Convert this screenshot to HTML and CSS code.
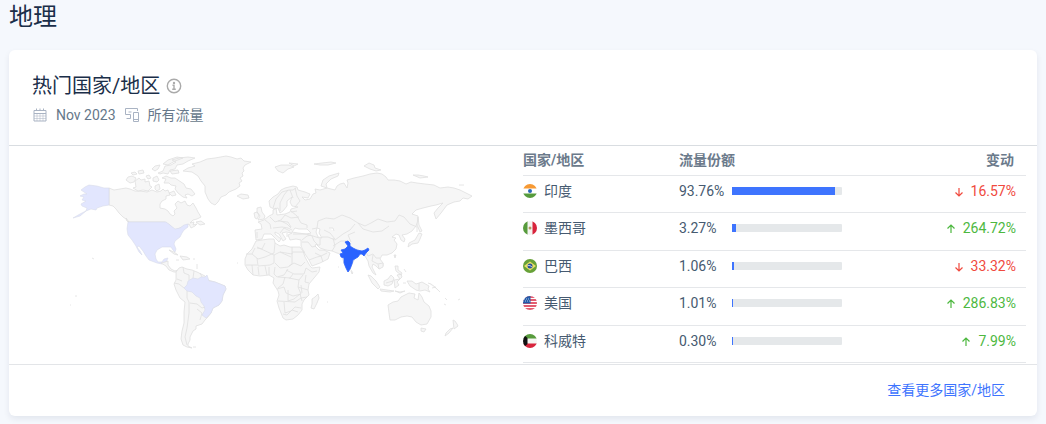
FILE: index.html
```html
<!DOCTYPE html>
<html lang="zh-CN">
<head>
    <meta charset="UTF-8">
    <meta name="viewport" content="width=device-width, initial-scale=1.0">
    <title>地理</title>
    <link rel="stylesheet" href="styles.css">
</head>
<body>
    <h1>地理</h1>

    <section class="card">
        <header class="card-header">
            <h2>热门国家/地区
                <svg class="info" viewBox="0 0 16 16" width="16" height="16"><circle cx="8" cy="8" r="6.700"/><path d="M6.500 7.200H8v4M6.200 11.300h3.600"/><circle class="dot" cx="8" cy="4.900" r=".5"/></svg>
            </h2>
            <div class="meta">
                <svg viewBox="0 0 16 16" width="16" height="16"><path d="M2 3.500h12v10.500H2zM2 6.500h12M4.500 1.500v2M8 1.500v2M11.500 1.500v2"/><path class="thin" d="M5 6.500v7.500M8 6.500v7.500M11 6.500v7.500M2 9h12M2 11.500h12"/></svg>
                <span>Nov 2023</span>
                <svg viewBox="0 0 16 16" width="16" height="16"><path d="M13.500 4V1.500H1.500v6H6.500V11.500M2.500 11.500h4M4.500 5h3M9.500 5.500h5v9h-5zM9.500 12.500h5"/></svg>
                <span>所有流量</span>
            </div>
        </header>

        <div class="content">
            <svg class="map" viewBox="9 146 514 218" role="img" aria-label="热门国家/地区">
                <!-- North America -->
                <path class="land" d="M109 188L114 190 120 189 126 188 130 189 135 191 140 191 147 192 152 190 157 192 161 191 163 189 165 191 168 190 170 195 166 196 166 199 162 201 160 204 160 208 165 209 168 211 170 214 173 216 175 214 174 211 177 208 175 204 178 201 181 203 185 201 187 205 190 206 193 203 196 208 198 212 201 217 197 219 193 220 190 223 194 222 193 225 197 224 195 226 191 228 189 224 182 227 175 230 170 225 165 222 128 222 126 219 123 217 119 213 116 209 113 206 109 205z"/>
                <path class="land" d="M183 171L188 168 195 166 192 164 200 162 207 159 215 158 226 156 231 157 237 159 241 158 244 161 251 162 245 165 243 168 244 171 242 173 243 176 240 178 242 181 239 183 240 186 236 189 229 192 226 195 221 197 218 202 215 205 211 203 208 199 205 192 205 186 201 181 198 176 192 172z"/>
                <path class="land" d="M126 180l2-3 4-1 4 2-2 4-4 1zM135 181l4-3 2 2 4-1 0 3 4-1 1 5 2 1-4 4-5-1-5 1-5-3 3-1zM131 173l4-1 2 2-4 1zM138 171l5-1 1 3-5 1zM146 176l3-1 2 3-3 1zM153 178l4-2 2 4-2 2-4-1zM155 186l4-2 1 5-3 2-2-2zM162 178l4-2 5 2 4 0 6 4 3 2 2 4 5 1 4 5-3 2-4-2-3 1 2 3-4-1-5-4-3-4 1-3-5-1-2-2-5 0 2-4zM152 169l3-3 5-1-2 4-3 2zM158 173l5-2 2-5 6-1 5-3-4-2 7-2 9-1 7 1-7 3-5 3-6 1-2 4-5 1-2 4-5-1-3 1zM163 164l5-4 9-3 6 1-8 3-7 4zM170 171l8-1 1 3-7 1zM169 193l5-2 2 4-4 1zM196 222l5-1 4 3-5 1zM126 218l3 4-2-1z"/>
                <path class="country" d="M81 190L85 187 89 185 97 186 104 188 109 188V205L103 206 97 208 96 210 91 209 86 211 80 216 73 218 80 214 86 211 87 208 82 206 81 204 86 201 82 200 84 197 80 196 84 194 87 194z"/>
                <path class="country" d="M128 222H166L170 225 175 229 180 228 184 225 188 224 188 227 184 230 182 233 180 237 175 241 174 244 176 249 175 252 173 250 171 247 166 247 162 247 157 250 155 254 156 259 158 262 162 262 164 259 168 258 166 262 162 264 157 263 149 260 146 256 143 251 139 246 137 247 140 251 142 255 139 252 136 246 132 240 128 235 127 229z"/>
                <path class="land" d="M161 263l4-1 3-1 0 4 3 4 4 2 3-1 0 2-4 0-5-2-3-4zM169 250l5 2 4 3-4-1zM180 256l7 1 3 2-7 1zM176 260l3 0M193 259l2 0M197 264l0 5"/>
                <!-- South America -->
                <path class="land" d="M176 272L179 268 182 267 187 269 192 270 197 272 201 274 205 276 208 280 215 282 225 286 226 289 223 295 222 301 219 305 213 308 211 313 208 317 205 320 202 324 196 326 196 329 193 331 190 337 190 340 188 344 188 346 192 348 187 347 183 345 181 339 182 331 184 323 184 312 185 302 180 298 176 290 174 284 176 280z"/>
                <path class="country" d="M188 281L193 278 198 279 201 277 205 277 207 275 209 281 215 282 225 286 226 289 223 295 222 301 219 305 213 308 211 313 206 318 202 315 205 310 204 306 201 302 200 298 196 296 192 292 187 291 184 288 187 285z"/>
                <path class="border" d="M183 267l1 6 5 2 0 5M177 279l5 2M174 283l5 1 5 4M193 278l1-7M202 277l-2-4M187 291l0 7 2 4 0 11-2 15-2 9 2 8M190 303l7 1 5 4 3-1M197 309l5 4-2 7"/>
                <path class="land" d="M92 258l2 1M75 296l2 0M70 305l1 0M237 263l1 0M193 347l3 0"/>
                <!-- Europe and Asia -->
                <path class="land" d="M270 207L269 201 273 197 278 194 281 190 285 188 289 187 293 186 297 187 298 190 305 192 310 194 308 198 302 197 305 200 310 199 313 194 316 193 315 189 320 190 327 188 335 190 337 186 340 184 344 183 347 188 348 183 347 180 354 178 363 176 370 174 377 173 382 174 386 177 388 180 394 180 400 181 406 184 411 182 417 183 425 184 434 185 440 188 448 187 454 188 460 190 466 193 472 196 468 199 463 198 460 201 454 202 447 205 444 209 441 213 436 219 434 213 438 208 443 203 436 205 431 206 423 208 416 210 412 214 418 216 418 221 416 226 412 231 407 234 402 235 405 239 404 242 401 240 399 235 396 234 392 237 396 238 394 240 397 244 396 249 392 253 387 255 382 255 380 259 383 263 383 266 379 269 376 266 373 264 372 267 376 275 373 273 369 266 368 261 365 256 361 254 356 257 352 264 350 270 348 272 345 266 343 260 341 254 337 253 332 251 326 250 320 248 316 244 315 246 319 250 324 250 330 253 328 259 320 263 312 266 309 260 305 254 301 246 301 240 296 239 290 240 288 235 292 233 286 232 282 233 286 239 283 241 279 234 275 232 275 234 281 239 279 242 275 238 271 234 264 234 262 239 256 240 255 230 262 229 261 224 258 222 264 220 269 216 273 214 273 210 276 208 277 215 285 214 290 212 291 209 298 207 292 206 290 202 292 197 287 201 287 206 283 211 280 213 278 208 274 209z"/>
                <path class="water" d="M292 232L295 228 299 229 303 229 307 229 311 233 306 234 298 233zM317 228L320 229 319 233 322 238 318 237 316 232zM329 228l4 0 1 3"/>
                <path class="land" d="M255 218l-1-5 3-1 2 3-2 4zM257 208l4-1 1 5 3 4-1 3-6 1 2-4-3-4zM237 196l4-2 7 1 1 3-6 1zM275 167l6-2 8 0 5 2-6 2-5 4-5-2zM289 163l9 1-4 2zM314 164l8-1 9-1 5 1-8 2-8 0zM321 186l2-6 6-4 10-3-1 3-7 3-5 5 1 4zM364 166l5-3 5 2 1 3 6 2-5 1-6-2zM413 175l5 0 6 1 4 1-8 1zM459 185l5 0M418 217l1 8 3 6-2 1-3-7zM419 233l3 1-2 5-2 4-6 1-4 3 1-4 6-3z"/>
                <path class="border" d="M273 208l3-9 6-7 7-2 4 0 3-2M280 211l0-8 4-8 4-5M290 190l3 8M295 188l2 8 3 5-5 6M265 220l5 4 1 5M270 217l5 5 6-2 4-5M285 215l6 3 8-1M281 221l6 3 4 4M273 228l9-1 6 1 4 2M291 211l6 5 4 7 6 2 0 3M297 211l-6 1M280 233l4-5 6 3M257 232l0 6M291 227l-3-5-10-1M287 233l0 4M293 234l13 0 7 2 6 2M312 229l5-1 1-7 8-3 8 1 8-4 8 3 8 5 7 3 6-3 7-4 9 3 8-1 4-6 5 2 6 7 7 3 0 5M358 223l5 6 10 3 9-1 7-5M322 237l6 0 7 3 8-6 7-4 5-6M302 240l5-4 4-1M302 242l6 0 4 5 4-1M312 236l2 5 4 4M320 238l0 7-3 0M333 238l2 8-3 5M333 246l8-5 7 0M324 230l6 3 5 6M351 242l-3-7 7-3M356 249l6 3 5-2M365 250l3 6 5-2 3 4 4 0M373 255l-1 6 6 3M315 253l6 3 6-3M309 260l8-3 4-1 2 6"/>
                <!-- Africa -->
                <path class="land" d="M256 241L262 240 269 239 274 239 275 243 280 246 284 245 290 247 300 247 303 251 305 257 310 266 312 268 320 267 319 272 314 278 309 284 308 290 309 295 304 300 302 304 302 310 298 315 293 319 286 320 283 318 279 308 277 301 279 295 278 291 273 283 274 278 269 275 260 276 253 275 248 270 245 265 245 259 247 254 252 249z"/>
                <path class="land" d="M312 304L312 299 315 297 318 294 319 298 317 303 314 309 311 308z"/>
                <path class="border" d="M246 254l6 0 3-6M252 254l6 5 7-2 9-4 1-10M257 247l17 8 6-3 12 2 0-7M265 243l-3 6-5-1M292 252h13M292 253v11l-4 3-8 1-5-5M274 255l0 8-4 2-12 1-1-8M280 252l11 5M246 265h11M252 265l1 10M258 267l1 8M265 266l2 9M269 267l0 8M275 267l-1 7 3 3 7-2 4-6M286 270l8 4 10 0 2-6 6 4 5-1M289 266l5-3 7 3 4-4M293 274l-3 4-12-1M285 277l-2 7-5 4M303 275l-4 5-10-2M299 280l-1 7 3 7-8 2-7-3-2-6-7 2M306 275l-1 7 4 1M298 287l10 3M278 301l17 1 6-4 6-1M288 290l0 11 6-2 6-5 2 7M284 302l1 11 6-2 4-4 6 1M283 314l4 1 5-5 6 2M301 285l1 8"/>
                <path class="land" d="M327 302l1 0M338 267l1 0"/>
                <!-- India -->
                <path class="india" d="M345 242L348 241 350 243 350 246 353 248 357 250 362 251 365 250 368 248 369 250 366 253 364 256 362 254 360 254 358 257 353 260 352 264 350 269 348 272 346 268 344 263 344 258 341 257 340 254 343 253 341 250 345 249 348 246z"/>
                <path class="land" d="M351 270l2 3-1 1-1-3"/>
                <!-- South East Asia and Oceania -->
                <path class="land" d="M368 275l3 1 5 5 4 6-2 2-6-6zM380 289l7 1 7 1-4 1-9-1zM384 281l4-2 3-4 3 3-2 6-4 2-4-1zM394 280l6-1-3 3 2 3-4 3zM395 266l3 0 0 4 4 3-1 2-5-4zM397 275l4-1 1 3-2 2zM395 291l5 1 5-1-5 2zM394 255l2 0-1 3zM378 264l5-1 0 4-4 2zM407 281l5 0 4 3 6-2 7 4-1 3 2 3-5-2-5 1-4-1-6-4zM428 283l3 1 4 3 5 5M432 288l4-1M445 298l2 2M444 304l2 1M458 300l2-1M453 320l2 1 2 3 1 2-4 3zM453 328l-4 5-4 3 1-3 4-4zM421 328l5 1-2 3-3-1zM404 269l2 3M403 283l3 0"/>
                <path class="border" d="M419 283v7M386 283l7-2"/>
                <path class="land" d="M388 305L393 302 398 301 401 297 405 295 409 293 415 294 414 298 418 300 419 293 422 297 424 302 429 306 431 311 431 317 427 324 421 325 416 322 412 317 407 316 401 317 395 320 390 320 389 313z"/>
            </svg>

            <table>
                <thead>
                    <tr><th class="name">国家/地区</th><th class="share">流量份额</th><th class="change">变动</th></tr>
                </thead>
                <tbody>
                    <tr>
                        <td><div class="cell"><svg class="flag" viewBox="0 0 14 14"><path fill="#fff" d="M0 0h14v14H0z"/><path fill="#f79a34" d="M0 0h14v4.500H0z"/><path fill="#579b3c" d="M0 9.500h14V14H0z"/><circle cx="7" cy="7" r="2" fill="#2a67b8"/></svg>印度</div></td>
                        <td><div class="cell"><span class="percent">93.76%</span><span class="bar"><span style="width:94%"></span></span></div></td>
                        <td class="change down"><svg viewBox="0 0 10 10"><path d="M5 1v8M1.500 5.500L5 9l3.500-3.500"/></svg>16.57%</td>
                    </tr>
                    <tr>
                        <td><div class="cell"><svg class="flag" viewBox="0 0 14 14"><path fill="#f5f5f2" d="M0 0h14v14H0z"/><path fill="#579b3c" d="M0 0h4.500v14H0z"/><path fill="#d8243c" d="M9.500 0H14v14H9.500z"/><circle cx="7" cy="7" r="1.500" fill="#b39a62"/></svg>墨西哥</div></td>
                        <td><div class="cell"><span class="percent">3.27%</span><span class="bar"><span style="width:4%"></span></span></div></td>
                        <td class="change up"><svg viewBox="0 0 10 10"><path d="M5 9V1M1.500 4.500L5 1l3.500 3.500"/></svg>264.72%</td>
                    </tr>
                    <tr>
                        <td><div class="cell"><svg class="flag" viewBox="0 0 14 14"><path fill="#67a138" d="M0 0h14v14H0z"/><path fill="#e8df68" d="M1 7l6-4.500L13 7l-6 4.500z"/><circle cx="7" cy="7" r="2.500" fill="#29539b"/><path stroke="#fff" stroke-width=".7" fill="none" d="M4.700 6.500q2.500-.5 4.300 1.500"/></svg>巴西</div></td>
                        <td><div class="cell"><span class="percent">1.06%</span><span class="bar"><span style="width:1.5%"></span></span></div></td>
                        <td class="change down"><svg viewBox="0 0 10 10"><path d="M5 1v8M1.500 5.500L5 9l3.500-3.500"/></svg>33.32%</td>
                    </tr>
                    <tr>
                        <td><div class="cell"><svg class="flag" viewBox="0 0 14 14"><path fill="#fff" d="M0 0h14v14H0z"/><path stroke="#d92740" stroke-width="1.500" d="M0 1h14M0 4h14M0 7h14M0 10h14M0 13h14"/><path fill="#245baa" d="M0 0h7.500v7.500H0z"/><path stroke="#d8e4f5" stroke-width=".8" stroke-dasharray="1 1" d="M1 3h6M2 5h5"/></svg>美国</div></td>
                        <td><div class="cell"><span class="percent">1.01%</span><span class="bar"><span style="width:1.4%"></span></span></div></td>
                        <td class="change up"><svg viewBox="0 0 10 10"><path d="M5 9V1M1.500 4.500L5 1l3.500 3.500"/></svg>286.83%</td>
                    </tr>
                    <tr>
                        <td><div class="cell"><svg class="flag" viewBox="0 0 14 14"><path fill="#f5f5f2" d="M0 0h14v14H0z"/><path fill="#579b3c" d="M0 0h14v4.500H0z"/><path fill="#d8243c" d="M0 9.500h14V14H0z"/><path fill="#111" d="M0 0l4.500 4v6L0 14z"/></svg>科威特</div></td>
                        <td><div class="cell"><span class="percent">0.30%</span><span class="bar"><span style="width:0.5%"></span></span></div></td>
                        <td class="change up"><svg viewBox="0 0 10 10"><path d="M5 9V1M1.500 4.500L5 1l3.500 3.500"/></svg>7.99%</td>
                    </tr>
                </tbody>
            </table>
        </div>

        <footer class="card-footer"><a href="#">查看更多国家/地区</a></footer>
    </section>
</body>
</html>
```

FILE: styles.css
```css
* {
    box-sizing: border-box;
}

body {
    margin: 0;
    padding: 0 9px 8px;
    background: #f5f8fd;
    color: #465a70;
    font-family: Roboto, "Noto Sans CJK SC", sans-serif;
    font-size: 14px;
    line-height: 20px;
}

h1 {
    margin: 0 0 16px;
    color: #1a2e49;
    font-size: 24px;
    font-weight: 400;
    line-height: 34px;
}

.card {
    background: #fff;
    border-radius: 6px;
    box-shadow: 0 3px 6px rgba(14, 30, 62, 0.08);
}

.card-header {
    padding: 22px 23px 20px;
    border-bottom: 1px solid #d9dde1;
}

h2 {
    display: flex;
    align-items: center;
    gap: 6px;
    margin: 0 0 5px;
    color: #1a2e49;
    font-size: 20px;
    font-weight: 400;
    line-height: 28px;
}

.info {
    fill: none;
    stroke: #aaa;
    stroke-width: 1.4;
}

.info .dot {
    fill: #aaa;
}

.meta {
    display: flex;
    align-items: center;
    gap: 8px;
    color: #66788a;
}

.meta svg {
    fill: none;
    stroke: #a9b3c3;
}

.meta .thin {
    stroke-width: 0.5;
}

.content {
    display: grid;
    grid-template-columns: 1fr 1fr;
    border-bottom: 1px solid #e3e5e8;
}

/* Map */
.map {
    display: block;
    width: 100%;
}

.map path {
    stroke-linejoin: round;
}

.land {
    fill: #f6f6f6;
    stroke: #dfdfdf;
    stroke-width: 0.8;
}

.country {
    fill: #e2e6fe;
    stroke: #d9dcea;
    stroke-width: 0.6;
}

.india {
    fill: #2962ff;
    stroke: #2962ff;
    stroke-width: 0.8;
}

.border {
    fill: none;
    stroke: #dfdfdf;
    stroke-width: 0.8;
}

.water {
    fill: #fff;
    stroke: #dfdfdf;
    stroke-width: 0.8;
}

/* Countries table */
table {
    width: calc(100% - 11px);
    align-self: start;
    border-collapse: collapse;
    table-layout: fixed;
}

th, td {
    padding: 0;
    border-bottom: 1px solid #e5e7ea;
    text-align: left;
}

th {
    height: 29px;
    color: #6b7a8b;
    font-weight: 700;
}

td {
    height: 37px;
    padding-bottom: 6px;
}

tbody tr:nth-child(even) td {
    height: 38px;
}

.name {
    width: 31%;
}

.share {
    width: 34%;
}

.change {
    text-align: right;
    padding-right: 10px;
}

th.change {
    padding-right: 12px;
}

.cell {
    display: flex;
    align-items: center;
}

.flag {
    width: 14px;
    height: 14px;
    margin-right: 7px;
    border-radius: 50%;
}

.percent {
    width: 53px;
}

.bar {
    width: 110px;
    height: 8px;
    background: #e5e8ea;
    border-radius: 1px;
}

.bar span {
    display: block;
    height: 8px;
    background: #3e74fe;
}

.change svg {
    width: 10px;
    height: 10px;
    margin-right: 7px;
    vertical-align: -1px;
    fill: none;
    stroke: currentColor;
    stroke-width: 1.2;
}

.down {
    color: #f04a3e;
}

.up {
    color: #4db83f;
}

.card-footer {
    padding: 15px 32px 16px;
    text-align: right;
}

.card-footer a {
    color: #3e74fe;
    text-decoration: none;
}
```
